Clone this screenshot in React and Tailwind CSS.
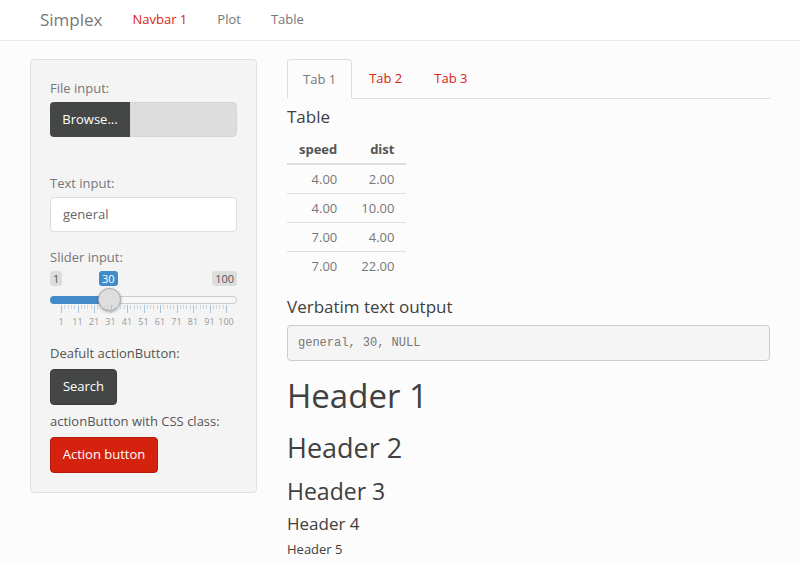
import React from "react";

function Slider() {
  const left = 11;
  const span = 165;
  const majors = [1, 11, 21, 31, 41, 51, 61, 71, 81, 91, 100];
  const minors = [];
  for (let k = 0; k < 10; k++) {
    for (let j = 1; j <= 4; j++) minors.push(k * 10 + j * 2);
  }
  return (
    <div className="relative h-[59px] w-full">
      <span className="absolute left-0 top-0 h-[15px] px-[3px] rounded-[3px] bg-[#ddd] text-[11px] leading-[15px] text-[#555]">1</span>
      <span className="absolute left-[49px] top-0 h-[15px] px-[3px] rounded-[3px] bg-[#428bca] text-[11px] leading-[15px] text-white">30</span>
      <span className="absolute right-0 top-0 h-[15px] px-[3px] rounded-[3px] bg-[#ddd] text-[11px] leading-[15px] text-[#555]">100</span>
      <div className="absolute left-0 right-0 top-[25px] h-[8px] rounded-full border border-[#ccc] bg-[#f7f7f7]"></div>
      <div className="absolute left-0 w-[60px] top-[25px] h-[8px] rounded-l-full bg-[#428bca]"></div>
      <div className="absolute left-[48px] top-[17px] w-[23px] h-[23px] rounded-full border border-[#aaa] bg-[#dedede] shadow-[0_1px_3px_rgba(0,0,0,0.3)]"></div>
      {minors.map((p) => (
        <div
          key={"m" + p}
          className="absolute top-[34px] w-px h-[4px] bg-[#c9d5e0]"
          style={{ left: left + (p / 100) * span }}
        ></div>
      ))}
      {majors.map((v, i) => (
        <div
          key={"M" + v}
          className="absolute top-[34px] w-px h-[8px] bg-[#a3c4e2]"
          style={{ left: left + (i / 10) * span }}
        ></div>
      ))}
      {majors.map((v, i) => (
        <span
          key={"L" + v}
          className="absolute top-[45px] text-[9px] leading-[11px] text-[#999] w-[30px] text-center"
          style={{ left: left + (i / 10) * span - 15 }}
        >
          {v}
        </span>
      ))}
    </div>
  );
}

export default function App() {
  const rows = [
    ["4.00", "2.00"],
    ["4.00", "10.00"],
    ["7.00", "4.00"],
    ["7.00", "22.00"],
  ];
  return (
    <div className="min-h-[564px] w-[800px] bg-[#fcfcfc] font-['Open_Sans',sans-serif] text-[13px] text-[#777] overflow-hidden">
      <nav className="h-[41px] bg-white border-b border-[#eaeaea] flex items-center pl-[40px]">
        <span className="text-[17px] text-[#777] mr-[30px]">Simplex</span>
        <span className="text-[13px] text-[#d9230f] mr-[30px]">Navbar 1</span>
        <span className="text-[13px] text-[#777] mr-[30px]">Plot</span>
        <span className="text-[13px] text-[#777]">Table</span>
      </nav>
      <div className="flex pl-[30px] pt-[18px] gap-[30px]">
        <div className="w-[227px] h-[434px] bg-[#f4f4f4] border border-[#e0e0e0] rounded-[4px] px-[19px] pt-[19px] flex flex-col">
          <div className="leading-[18px] mb-[5px]">File input:</div>
          <div className="flex h-[35px] rounded-[4px] overflow-hidden">
            <div className="w-[80px] bg-[#454747] text-white flex items-center justify-center">Browse...</div>
            <div className="flex-1 bg-[#dddddd] border border-[#d5d5d5] rounded-r-[4px]"></div>
          </div>
          <div className="leading-[18px] mt-[37px] mb-[5px]">Text input:</div>
          <div className="h-[35px] bg-white border border-[#ddd] rounded-[4px] flex items-center px-[12px] text-[#666]">general</div>
          <div className="leading-[18px] mt-[16px] mb-[5px]">Slider input:</div>
          <Slider />
          <div className="leading-[18px] mt-[14px] mb-[7px] text-[#555]">Deafult actionButton:</div>
          <div className="w-[67px] h-[36px] bg-[#454747] rounded-[4px] border border-[#3a3b3b] text-white flex items-center justify-center">Search</div>
          <div className="leading-[18px] mt-[7px] mb-[7px] text-[#555]">actionButton with CSS class:</div>
          <div className="w-[108px] h-[36px] bg-[#d5220f] rounded-[4px] border border-[#b51b0c] text-white flex items-center justify-center">Action button</div>
        </div>
        <div className="w-[483px] flex flex-col">
          <div className="flex h-[40px] border-b border-[#ddd]">
            <div className="h-[40px] -mb-px px-[15px] border border-[#ddd] border-b-[#fcfcfc] rounded-t-[4px] bg-[#fcfcfc] flex items-center pt-px text-[#777]">Tab 1</div>
            <div className="ml-[2px] px-[15px] flex items-center pt-px text-[#d9230f]">Tab 2</div>
            <div className="ml-[2px] px-[15px] flex items-center pt-px text-[#d9230f]">Tab 3</div>
          </div>
          <div className="mt-[8px] text-[17px] leading-[19px] text-[#404040]">Table</div>
          <table className="mt-[9px] w-fit border-collapse text-[13px]">
            <thead>
              <tr className="border-b-2 border-[#ddd]">
                <th className="px-[12px] py-[5px] leading-[18px] text-right font-bold text-[#555]">speed</th>
                <th className="px-[12px] py-[5px] leading-[18px] text-right font-bold text-[#555]">dist</th>
              </tr>
            </thead>
            <tbody>
              {rows.map((r, i) => (
                <tr key={i} className={i > 0 ? "border-t border-[#ddd]" : ""}>
                  <td className="px-[12px] py-[5px] leading-[18px] text-right">{r[0]}</td>
                  <td className="px-[12px] py-[5px] leading-[18px] text-right">{r[1]}</td>
                </tr>
              ))}
            </tbody>
          </table>
          <div className="mt-[17px] text-[17px] leading-[19px] text-[#404040]">Verbatim text output</div>
          <pre className="mt-[9px] h-[36px] bg-[#f5f5f5] border border-[#ccc] rounded-[4px] px-[10px] flex items-center font-['Liberation_Mono',monospace] text-[12px] text-[#777]">general, 30, NULL</pre>
          <div className="mt-[17px] text-[33px] leading-[36px] text-[#404040]">Header 1</div>
          <div className="mt-[19px] text-[27px] leading-[30px] text-[#404040]">Header 2</div>
          <div className="mt-[16px] text-[23px] leading-[25px] text-[#404040]">Header 3</div>
          <div className="mt-[10px] text-[17px] leading-[19px] text-[#404040]">Header 4</div>
          <div className="mt-[9px] text-[13px] leading-[14px] text-[#404040]">Header 5</div>
        </div>
      </div>
    </div>
  );
}
